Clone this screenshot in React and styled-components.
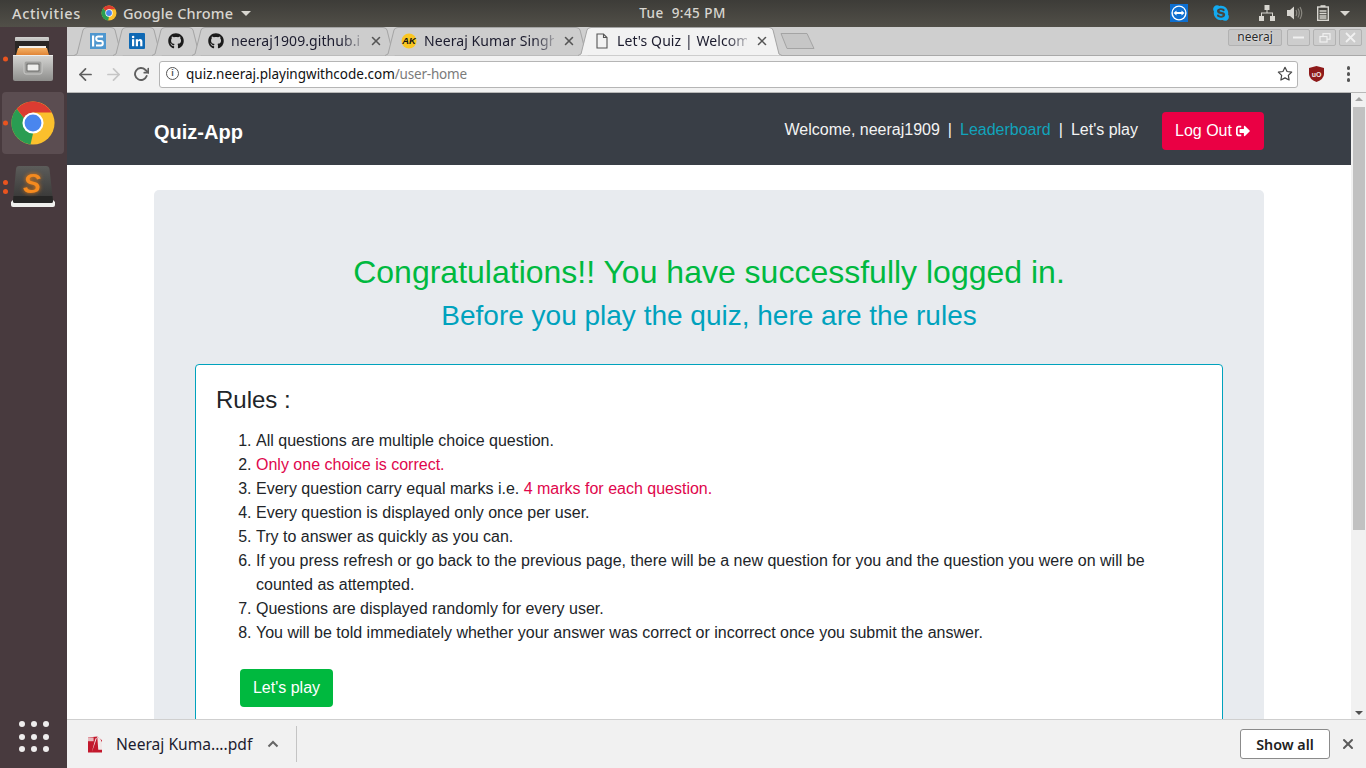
import React from "react";
import styled, { createGlobalStyle } from "styled-components";
import { FaGithub, FaSkype, FaSignOutAlt } from "react-icons/fa";
import { FiArrowLeft, FiArrowRight, FiRotateCw, FiStar, FiX } from "react-icons/fi";

const Global = createGlobalStyle`
  html, body { margin: 0; padding: 0; background: #fff; overflow: hidden; }
  * { box-sizing: border-box; }
`;
const UI = `"Noto Sans", "Open Sans", sans-serif`;
const WEB = `"Liberation Sans", Arial, sans-serif`;

const Desktop = styled.div`
  width: 1366px; height: 768px; display: grid; grid-template-rows: 27px 1fr; overflow: hidden;
`;
const TopBar = styled.header`
  display: grid; grid-template-columns: 1fr auto 1fr; align-items: center;
  background: linear-gradient(#3d3c38, #514f48);
  color: #d8d6d0; font: 500 14.5px ${UI}; padding: 0 12px 1px;
`;
const TopLeft = styled.div`display: flex; align-items: center;`;
const Activities = styled.span`margin-right: 20px; letter-spacing: .64px;`;
const AppMenu = styled.span`display: flex; align-items: center; gap: 6px; letter-spacing: .15px;`;
const Caret = styled.i`
  width: 0; height: 0; border: 5px solid transparent; border-top: 5px solid #d8d6d0; border-bottom: 0;
  margin-left: ${(p) => p.$ml || 0}px;
`;
const Clock = styled.span`letter-spacing: .45px; font-size: 13.5px; white-space: pre; margin-left: -1px;`;
const Tray = styled.div`display: flex; align-items: center; justify-content: flex-end; padding-right: 0;`;
const TrayItem = styled.span`display: flex; width: 18px; justify-content: center; margin-left: ${(p) => p.$ml}px;`;

const Main = styled.div`display: flex; min-height: 0;`;
const Dock = styled.nav`
  width: 67px; background: #483a3e; display: flex; flex-direction: column; align-items: center;
  gap: 2px; padding: 1px 3px 16px 2px;
`;
const DockItem = styled.div`
  position: relative; width: 62px; height: 62px; flex: none; display: flex; align-items: center;
  justify-content: center; border-radius: 4px;
  background: ${(p) => (p.$active ? "#5b4d51" : "transparent")};
`;
const Pips = styled.div`
  position: absolute; left: 1px; top: 50%; transform: translateY(-50%); display: flex;
  flex-direction: column; gap: 4px;
`;
const Pip = styled.i`display: block; width: 5px; height: 5px; border-radius: 50%; background: #e9541f;`;
const Grid9 = styled.div`
  margin-top: auto; display: grid; grid-template-columns: repeat(3, 6px); gap: 6.4px; margin-left: 2px;
`;
const GridDot = styled.i`width: 6px; height: 6px; border-radius: 50%; background: #efeded;`;

const Browser = styled.div`flex: 1; min-width: 0; display: flex; flex-direction: column; background: #f1f1f1;`;
const TabStrip = styled.div`
  height: 29px; flex: none; background: #cfcfcf; display: flex; align-items: stretch; padding-left: 7px;
  font: 14px ${UI}; color: #1c1c2e; border-bottom: 1px solid #a9a9a9;
`;
const TabBox = styled.div`
  position: relative; width: ${(p) => p.$w}px; height: 29px; margin-right: ${(p) => p.$mr}px;
  flex: none; display: flex; align-items: center; padding: 0 13px 2px 16px; z-index: ${(p) => (p.$active ? 3 : 1)};
`;
const TabShape = styled.svg`position: absolute; inset: 0; width: 100%; height: 100%;`;
const TabContent = styled.div`position: relative; display: flex; align-items: center; width: 100%; min-width: 0;`;
const TabIcon = styled.span`display: flex; flex: none; width: 16px; height: 16px;`;
const TabTitle = styled.span`
  flex: 1; min-width: 0; margin-left: 7px; white-space: nowrap; letter-spacing: .08px;
  -webkit-mask-image: linear-gradient(90deg, #000 84%, rgba(0,0,0,.25) 100%);
  mask-image: linear-gradient(90deg, #000 84%, rgba(0,0,0,.25) 100%);
`;
const TabClose = styled.span`display: flex; flex: none; color: #555; margin-left: 8px;`;
const NewTab = styled.svg`flex: none; margin: 5px 0 0 1px;`;
const WindowControls = styled.div`display: flex; align-items: flex-start; margin-left: auto; gap: 3px; padding: 2px 4px 0 0;`;
const UserChip = styled.span`
  width: 54px; height: 17px; margin-right: 2px; border: 1px solid #b2b2b2; border-radius: 2px; background: #c6c6c6;
  font: 12px ${UI}; color: #2a2a2a; text-align: center; line-height: 14px; text-shadow: 0 0 2px #fff;
`;
const WinBtn = styled.span`
  width: 23px; height: 17px; border: 1px solid #b2b2b2; border-radius: 2px; background: #cdcdcd;
  display: flex; align-items: center; justify-content: center;
`;

const Toolbar = styled.div`
  height: 37px; flex: none; background: #f2f2f2; display: flex; align-items: center; padding: 0 0 0 4px;
  border-bottom: 1px solid #b8b8b8;
`;
const NavBtn = styled.span`display: flex; width: 28px; justify-content: center; color: ${(p) => p.$c || "#5f5f5f"};`;
const Omnibox = styled.div`
  width: 1139px; height: 27px; margin-left: 4px; background: #fff; border: 1px solid #b5b5b5; border-radius: 3px;
  display: flex; align-items: center; padding: 0 4px 1px 6px; font: 13.5px ${UI}; color: #111;
`;
const InfoIcon = styled.span`
  width: 13px; height: 13px; border: 1.5px solid #555; border-radius: 50%; color: #555; flex: none;
  font: 700 9px/10px ${WEB}; text-align: center; margin-right: 7px;
`;
const UrlPath = styled.span`color: #7b7b7b; letter-spacing: -.2px;`;
const StarWrap = styled.span`display: flex; margin-left: auto; color: #444; padding-top: 1px;`;
const ExtBtn = styled.span`display: flex; width: 36px; justify-content: center; margin-left: 0;`;
const MenuBtn = styled.span`display: flex; flex-direction: column; gap: 2.5px; margin-left: 13px;`;
const MenuDot = styled.i`width: 3.4px; height: 3.4px; background: #555; border-radius: 50%;`;

const Viewport = styled.div`flex: 1; min-height: 0; display: flex; background: #fff;`;
const Page = styled.main`flex: 1; min-width: 0; overflow: hidden; font: 16px/24px ${WEB}; color: #212529;`;
const NavBar = styled.div`height: 72px; background: #393e46; display: flex; justify-content: center;`;
const Container = styled.div`width: 1140px; padding: 0 15px; flex: none; margin: 0 auto;`;
const NavInner = styled(Container)`display: flex; align-items: center; justify-content: space-between; padding-top: 3px;`;
const Brand = styled.a`font-size: 20px; font-weight: 700; color: #fff; line-height: 30px; padding-top: 2px;`;
const NavLinks = styled.div`display: flex; align-items: center; color: #f3f3f3; margin-top: -1px;`;
const NavSep = styled.span`margin: 0 8px;`;
const NavLink = styled.a`color: ${(p) => p.$c || "#f3f3f3"};`;
const LogOut = styled.button`
  height: 38px; width: 102px; margin: 2px 0 0 24px; border: 0; border-radius: 4px; background: #ea0044; color: #fff;
  font: 16px ${WEB}; display: flex; align-items: center; justify-content: center; gap: 4px; padding: 0 1px 0 0;
`;
const Jumbo = styled.section`
  margin-top: 25px; background: #e8ebef; border-radius: 5px; padding: 63px 41px 40px; 
`;
const Congrats = styled.h2`
  margin: 0 0 8px; text-align: center; font: 400 32px/38.4px ${WEB}; color: #00b93f;
`;
const Before = styled.h3`
  margin: 0 0 31px; text-align: center; font: 400 28px/33.6px ${WEB}; color: #00a2bd;
`;
const RuleBox = styled.div`
  background: #fff; border: 1px solid #00a2bd; border-radius: 4px; padding: 21px 20px 20px;
`;
const RuleTitle = styled.h4`margin: 0 0 14px; font: 400 24px/28.8px ${WEB}; color: #212529;`;
const RuleList = styled.ol`margin: 0 0 24px; padding-left: 40px;`;
const Hot = styled.span`color: #e0064c;`;
const Play = styled.button`
  height: 38px; width: 93px; margin-left: 24px; border: 0; border-radius: 4px; background: #00b93f; color: #fff;
  font: 16px ${WEB}; padding: 0; display: block;
`;
const ScrollBar = styled.div`
  width: 15px; flex: none; background: #f1f1f1; display: flex; flex-direction: column; align-items: center; padding: 0 0 0 1px;
`;
const ScrollArrow = styled.i`
  width: 0; height: 0; flex: none; margin: ${(p) => (p.$up ? "4px 0 0" : "auto 0 4px")};
  border-left: 4px solid transparent; border-right: 4px solid transparent;
  ${(p) => (p.$up ? "border-bottom: 4px solid #a3a3a3;" : "border-top: 4px solid #505050;")}
`;
const ScrollThumb = styled.div`width: 12px; height: 423px; margin-top: 6px; background: #c1c1c1;`;

const DownloadBar = styled.footer`
  height: 49px; flex: none; background: #f1f1f1; border-top: 1px solid #cfcfcf; display: flex; align-items: center;
  padding: 0 10px 0 21px; font: 15.6px ${UI}; color: #1c1c2e;
`;
const FileName = styled.span`margin-left: 14px; white-space: nowrap;`;
const Chevron = styled.svg`margin-left: 15px; flex: none;`;
const Divider = styled.i`width: 1px; height: 36px; background: #c4c4c4; margin-left: 17px;`;
const ShowAll = styled.button`
  margin-left: auto; width: 90px; height: 30px; background: #fff; border: 1px solid #8b8b8b; border-radius: 3px;
  font: 600 14.3px ${UI}; color: #222; padding: 0;
`;
const CloseBar = styled.span`display: flex; margin-left: 10px; color: #5a5a5a;`;
const KeyLetter = styled.text`
  font: italic 700 27px ${WEB}; fill: #f58a1f; filter: drop-shadow(0 0 2px #e87a10);
`;

const ChromeLogo = ({ s }) => (
  <svg width={s} height={s} viewBox="0 0 48 48">
    <circle cx="24" cy="24" r="22.5" fill="#fbc02d" />
    <path d="M7 9.2 L14.4 18.5 24 35 21.4 46.4 A22.5 22.5 0 0 1 7 9.2Z" fill="#2a9d52" />
    <path d="M7 9.2 A22.5 22.5 0 0 1 43.5 13 H24 L14.4 18.5Z" fill="#dc3c31" />
    <circle cx="24" cy="24" r="11" fill="#fff" />
    <circle cx="24" cy="24" r="8.8" fill="#4a86ee" />
  </svg>
);

const Cabinet = () => (
  <svg width="44" height="46" viewBox="0 0 44 46">
    <defs>
      <linearGradient id="cabLid" x1="0" y1="0" x2="0" y2="1">
        <stop offset="0" stopColor="#d2d2d0" />
        <stop offset="1" stopColor="#8a8a88" />
      </linearGradient>
      <linearGradient id="cabFront" x1="0" y1="0" x2="0" y2="1">
        <stop offset="0" stopColor="#d6d6d4" />
        <stop offset="1" stopColor="#8e8e8c" />
      </linearGradient>
      <linearGradient id="cabFold" x1="0" y1="0" x2="0" y2="1">
        <stop offset="0" stopColor="#f4b266" />
        <stop offset="1" stopColor="#e08436" />
      </linearGradient>
    </defs>
    <path d="M4 2 Q4 1 5 1 H37 Q38 1 38 2 V14 H4Z" fill="url(#cabLid)" />
    <rect x="4" y="5" width="34" height="14" fill="#2a2725" />
    <rect x="8" y="10" width="27" height="2" fill="#f4f1ea" />
    <path d="M7 12 H36 L38 19 H5Z" fill="url(#cabFold)" />
    <path d="M2 19 H42 V43 Q42 45 40 45 H4 Q2 45 2 43Z" fill="url(#cabFront)" />
    <rect x="2" y="19" width="40" height="1" fill="#efefed" />
    <rect x="13" y="25" width="18" height="13" rx="2" fill="#a0a09e" stroke="#c9c9c7" />
    <rect x="15.500" y="27.500" width="13" height="8" rx="1" fill="#6a6a68" />
    <rect x="16.500" y="28.500" width="11" height="6" rx=".5" fill="#efefed" />
  </svg>
);

const Sublime = () => (
  <svg width="46" height="42" viewBox="0 0 46 42">
    <defs>
      <linearGradient id="keyFace" x1="0" y1="0" x2="0" y2="1">
        <stop offset="0" stopColor="#5c5c5a" />
        <stop offset="1" stopColor="#343433" />
      </linearGradient>
    </defs>
    <path d="M1 36 L3 34 H43 L45 36 V39 Q45 41 43 41 H3 Q1 41 1 39Z" fill="#efefed" />
    <path d="M3 35 L6 3 Q6.300 0 9 0 H36 Q39 0 39.500 3 L43 35 Q43 37 41 37 H5 Q3 37 3 35Z" fill="url(#keyFace)" />
    <path d="M3.500 30 H42.500 L43 35 Q43 37 41 37 H5 Q3 37 3 35Z" fill="#262625" />
    <KeyLetter x="22" y="27" textAnchor="middle">S</KeyLetter>
  </svg>
);

const Tab = ({ w, mr, active, icon, title }) => (
  <TabBox $w={w} $mr={mr} $active={active}>
    <TabShape viewBox={`0 0 ${w} 29`} preserveAspectRatio="none">
      <path
        d={`M0 28.5 L3 27 L9 3 Q10 .5 13 .5 H${w - 13} Q${w - 10} .5 ${w - 9} 3 L${w - 3} 27 L${w} 28.5`}
        fill={active ? "#f2f2f2" : "#cdcdcd"}
        stroke="#a4a4a4"
      />
    </TabShape>
    <TabContent>
      <TabIcon>{icon}</TabIcon>
      {title && <TabTitle>{title}</TabTitle>}
      {title && (
        <TabClose>
          <FiX size={14} strokeWidth={2.6} />
        </TabClose>
      )}
    </TabContent>
  </TabBox>
);

const ISIcon = () => (
  <svg width="16" height="16" viewBox="0 0 16 16">
    <rect width="16" height="16" fill="#4f97cf" />
    <rect x="2" y="2.5" width="2.2" height="11" fill="#fff" />
    <path d="M13 3.5H8.2Q6.2 3.5 6.2 5.5T8.2 8H10.8Q12.8 8 12.8 10.2T10.8 12.5H6" fill="none" stroke="#fff" strokeWidth="2" />
  </svg>
);
const InIcon = () => (
  <svg width="16" height="16" viewBox="0 0 16 16">
    <rect width="16" height="16" rx="1" fill="#0f69b4" />
    <rect x="3" y="6.2" width="2.2" height="7" fill="#fff" />
    <circle cx="4.1" cy="4" r="1.3" fill="#fff" />
    <path d="M6.8 6.2H9V7.2Q9.8 6 11.2 6 13.4 6 13.4 8.8V13.2H11.2V9.2Q11.2 7.9 10.2 7.9 9 7.9 9 9.3V13.2H6.8Z" fill="#fff" />
  </svg>
);
const AkIcon = () => (
  <svg width="17" height="16" viewBox="0 0 17 16">
    <circle cx="8.5" cy="8" r="8" fill="#f9c623" />
    <text x="8.5" y="11.5" textAnchor="middle" fontFamily="Liberation Sans" fontWeight="700" fontStyle="italic" fontSize="10" fill="#111">AK</text>
  </svg>
);
const DocIcon = () => (
  <svg width="16" height="16" viewBox="0 0 16 16" fill="none" stroke="#555" strokeWidth="1.1">
    <path d="M3 1H9.5L13 4.5V15H3Z M9.5 1V4.5H13" />
  </svg>
);

const rules = [
  <>All questions are multiple choice question.</>,
  <Hot>Only one choice is correct.</Hot>,
  <>Every question carry equal marks i.e. <Hot>4 marks for each question.</Hot></>,
  <>Every question is displayed only once per user.</>,
  <>Try to answer as quickly as you can.</>,
  <>If you press refresh or go back to the previous page, there will be a new question for you and the question you were on will be counted as attempted.</>,
  <>Questions are displayed randomly for every user.</>,
  <>You will be told immediately whether your answer was correct or incorrect once you submit the answer.</>,
];

export default function App() {
  return (
    <Desktop>
      <Global />
      <TopBar>
        <TopLeft>
          <Activities>Activities</Activities>
          <AppMenu>
            <ChromeLogo s={16} />
            Google Chrome
            <Caret $ml={2} />
          </AppMenu>
        </TopLeft>
        <Clock>{"Tue  9:45 PM"}</Clock>
        <Tray>
          <TrayItem $ml={0}>
            <svg width="18" height="18" viewBox="0 0 18 18">
              <rect width="18" height="18" fill="#0e6fd0" />
              <circle cx="9" cy="9" r="7.6" fill="#fff" />
              <circle cx="9" cy="9" r="6.2" fill="#0e6fd0" />
              <path d="M3.5 9 L6.5 6.6V8H11.5V6.6L14.5 9 11.5 11.4V10H6.5V11.4Z" fill="#fff" />
            </svg>
          </TrayItem>
          <TrayItem $ml={24}>
            <FaSkype size={18} color="#13aaf0" />
          </TrayItem>
          <TrayItem $ml={28}>
            <svg width="16" height="16" viewBox="0 0 16 16" fill="#d8d6d0">
              <rect x="5.5" y="0" width="5" height="5" />
              <rect x="0" y="11" width="5" height="5" />
              <rect x="11" y="11" width="5" height="5" />
              <path d="M7.5 5h1v2.5H14V11h-1V8.5H3V11H2V7.5h5.5Z" />
            </svg>
          </TrayItem>
          <TrayItem $ml={10}>
            <svg width="16" height="16" viewBox="0 0 16 16" fill="#d8d6d0">
              <path d="M0 5H3L7 1.5V14.5L3 11H0Z" />
              <path d="M9 5Q10.5 8 9 11M11 3.5Q13.5 8 11 12.500M13 2Q16.500 8 13 14" fill="none" stroke="#8a8880" strokeWidth="1.2" />
            </svg>
          </TrayItem>
          <TrayItem $ml={10}>
            <svg width="12" height="16" viewBox="0 0 12 16" fill="none" stroke="#d8d6d0" strokeWidth="1.4">
              <rect x=".7" y="2" width="10.600" height="13.300" />
              <rect x="3.500" y=".2" width="5" height="1.800" fill="#d8d6d0" stroke="none" />
              <path d="M2.500 6H9.500M2.500 8.500H9.500M2.500 11H9.500M2.500 13H9.500" strokeWidth="1.300" />
            </svg>
          </TrayItem>
          <TrayItem $ml={4}>
            <Caret />
          </TrayItem>
        </Tray>
      </TopBar>
      <Main>
        <Dock>
          <DockItem>
            <Pips><Pip /></Pips>
            <Cabinet />
          </DockItem>
          <DockItem $active>
            <Pips><Pip /></Pips>
            <ChromeLogo s={46} />
          </DockItem>
          <DockItem>
            <Pips><Pip /><Pip /></Pips>
            <Sublime />
          </DockItem>
          <Grid9>
            {Array.from({ length: 9 }, (_, i) => <GridDot key={i} />)}
          </Grid9>
        </Dock>
        <Browser>
          <TabStrip>
            <Tab w={50} mr={-11} icon={<ISIcon />} />
            <Tab w={50} mr={-11} icon={<InIcon />} />
            <Tab w={50} mr={-10} icon={<FaGithub size={16} color="#1b1b1b" />} />
            <Tab w={204} mr={-11} icon={<FaGithub size={16} color="#1b1b1b" />} title="neeraj1909.github.i" />
            <Tab w={204} mr={-11} icon={<AkIcon />} title="Neeraj Kumar Singh" />
            <Tab w={204} mr={-3} active icon={<DocIcon />} title="Let's Quiz | Welcom" />
            <NewTab width="36" height="18" viewBox="0 0 36 18" fill="#c6c6c6" stroke="#a4a4a4">
              <path d="M1 1.500H27L34 16.500H7Z" />
            </NewTab>
            <WindowControls>
              <UserChip>neeraj</UserChip>
              <WinBtn>
                <svg width="11" height="3"><rect width="11" height="2" y=".5" fill="#f0f0f0" /></svg>
              </WinBtn>
              <WinBtn>
                <svg width="12" height="10" fill="none" stroke="#f0f0f0" strokeWidth="1.200"><rect x="4" y=".7" width="7" height="5.500" /><rect x="1" y="3.500" width="7" height="5.500" fill="#cdcdcd" /></svg>
              </WinBtn>
              <WinBtn>
                <svg width="11" height="11" stroke="#f0f0f0" strokeWidth="1.800"><path d="M1 1L10 10M10 1L1 10" /></svg>
              </WinBtn>
            </WindowControls>
          </TabStrip>
          <Toolbar>
            <NavBtn><FiArrowLeft size={19} strokeWidth={2.2} /></NavBtn>
            <NavBtn $c="#c6c6c6"><FiArrowRight size={19} strokeWidth={2.2} /></NavBtn>
            <NavBtn><FiRotateCw size={16} strokeWidth={2.8} /></NavBtn>
            <Omnibox>
              <InfoIcon>i</InfoIcon>
              quiz.neeraj.playingwithcode.com<UrlPath>/user-home</UrlPath>
              <StarWrap><FiStar size={16} strokeWidth={1.800} /></StarWrap>
            </Omnibox>
            <ExtBtn>
              <svg width="15" height="16" viewBox="0 0 15 16">
                <path d="M7.500 0 L15 2 V8 Q15 13 7.500 16 Q0 13 0 8 V2Z" fill="#8e1a1a" />
                <text x="7.500" y="10.500" textAnchor="middle" fontFamily="Liberation Sans" fontWeight="700" fontSize="7" fill="#f3e6e6">uO</text>
              </svg>
            </ExtBtn>
            <MenuBtn><MenuDot /><MenuDot /><MenuDot /></MenuBtn>
          </Toolbar>
          <Viewport>
            <Page>
              <NavBar>
                <NavInner>
                  <Brand>Quiz-App</Brand>
                  <NavLinks>
                    Welcome, neeraj1909
                    <NavSep>|</NavSep>
                    <NavLink $c="#11a3bb">Leaderboard</NavLink>
                    <NavSep>|</NavSep>
                    <NavLink>Let's play</NavLink>
                    <LogOut>Log Out <FaSignOutAlt size={14} /></LogOut>
                  </NavLinks>
                </NavInner>
              </NavBar>
              <Container>
                <Jumbo>
                  <Congrats>Congratulations!! You have successfully logged in.</Congrats>
                  <Before>Before you play the quiz, here are the rules</Before>
                  <RuleBox>
                    <RuleTitle>Rules :</RuleTitle>
                    <RuleList>
                      {rules.map((r, i) => <li key={i}>{r}</li>)}
                    </RuleList>
                    <Play>Let's play</Play>
                  </RuleBox>
                </Jumbo>
              </Container>
            </Page>
            <ScrollBar>
              <ScrollArrow $up />
              <ScrollThumb />
              <ScrollArrow />
            </ScrollBar>
          </Viewport>
          <DownloadBar>
            <svg width="14" height="17" viewBox="0 0 15 17" style={{ flex: "none" }}>
              <path d="M0 1 L10 0 L15 4 V17 H0Z" fill="#c3182c" />
              <path d="M4 17 L8 2 L10 1 L11 14 L15 14 V6 L13 2 L10 0Z" fill="#f1e7e7" />
              <path d="M0 1H6V5H0Z" fill="#e8b9bd" />
            </svg>
            <FileName>Neeraj Kuma....pdf</FileName>
            <Chevron width="12" height="8" viewBox="0 0 12 8" fill="none" stroke="#666" strokeWidth="2"><path d="M1.500 6.500L6 2L10.500 6.500" /></Chevron>
            <Divider />
            <ShowAll>Show all</ShowAll>
            <CloseBar><FiX size={16} strokeWidth={3} /></CloseBar>
          </DownloadBar>
        </Browser>
      </Main>
    </Desktop>
  );
}
